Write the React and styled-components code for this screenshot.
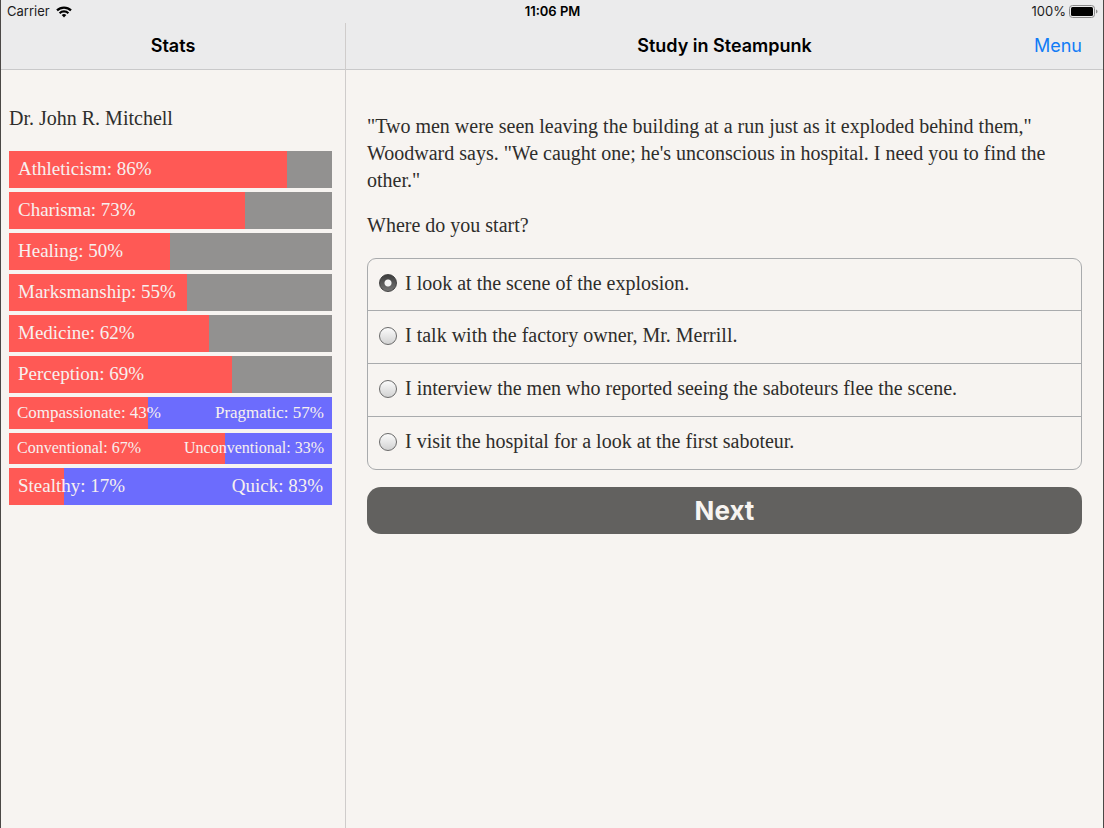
import React, { useState } from "react";
import styled, { createGlobalStyle, css } from "styled-components";

const GlobalStyle = createGlobalStyle`
  *, *::before, *::after { box-sizing: border-box; }
  body {
    margin: 0;
    background: #f7f4f1;
    color: #2e2d2b;
    font-family: "Liberation Serif", serif;
    font-size: 20px;
    line-height: 27px;
  }
`;

const sans = css`
  font-family: Inter, "Liberation Sans", sans-serif;
`;

const Screen = styled.div`
  min-height: 100vh;
  display: flex;
  flex-direction: column;
  border: solid #4b4846;
  border-width: 0 1px;
`;

const StatusBar = styled.div`
  ${sans}
  display: grid;
  grid-template-columns: 1fr auto 1fr;
  align-items: center;
  height: 23px;
  padding: 0 5px 0 6px;
  background: #ebebec;
  color: #1c1c1c;
  font-size: 13px;
  line-height: 23px;
`;

const StatusGroup = styled.div`
  display: flex;
  align-items: center;
  justify-content: ${(p) => (p.$end ? "flex-end" : "flex-start")};
  gap: ${(p) => (p.$end ? 3 : 6)}px;
`;

const Time = styled.time`
  color: #000;
  font-weight: 600;
`;

const Columns = styled.div`
  flex: 1;
  display: flex;
`;

const Sidebar = styled.aside`
  flex: 0 0 345px;
  display: flex;
  flex-direction: column;
  border-right: 1px solid #cfcccb;
`;

const Main = styled.main`
  flex: 1;
  min-width: 0;
`;

const NavBar = styled.header`
  ${sans}
  display: grid;
  grid-template-columns: 1fr auto 1fr;
  align-items: center;
  height: 47px;
  padding: 0 21px;
  border-bottom: 1px solid #c9c9ca;
  background: #ebebec;
`;

const Title = styled.h1`
  grid-column: 2;
  margin: 0;
  color: #000;
  font-size: 18px;
  font-weight: 600;
  line-height: 24px;
`;

const MenuButton = styled.button`
  justify-self: end;
  padding: 0;
  border: 0;
  background: none;
  color: #117cf6;
  font: inherit;
  font-size: 18px;
  line-height: 24px;
`;

const StatsPanel = styled.section`
  padding: 35px 13px 24px 8px;
`;

const Name = styled.p`
  margin: 0 0 19px;
`;

const StatList = styled.div`
  display: flex;
  flex-direction: column;
  gap: 4px;
`;

const barSizes = {
  large: css`
    height: 37px;
    padding: 0 9px 3px;
    font-size: 19px;
  `,
  medium: css`
    height: 32px;
    padding: 0 8px 2px;
    font-size: 17px;
  `,
  small: css`
    height: 31px;
    padding: 0 8px 2px;
    font-size: 16px;
  `,
};

const Bar = styled.div`
  display: flex;
  align-items: center;
  justify-content: space-between;
  color: #f7f0ef;
  background: linear-gradient(
    to right,
    #ff5955 var(--value),
    ${(p) => (p.$opposed ? "#6c6cfd" : "#929190")} var(--value)
  );
  white-space: nowrap;
  ${(p) => barSizes[p.$size]}
`;

const Story = styled.form`
  padding: 43px 21px 24px;
`;

const Paragraph = styled.p`
  margin: 0 0 18px;
`;

const Question = styled.p`
  margin: 0 0 19px;
`;

const Choices = styled.fieldset`
  min-width: 0;
  margin: 0 0 17px;
  padding: 0;
  border: 1px solid #a9abad;
  border-radius: 9px;
`;

const Choice = styled.label`
  display: flex;
  align-items: center;
  gap: 8px;
  min-height: 51px;
  padding: 0 11px 3px;

  & + & {
    min-height: 53px;
    border-top: 1px solid #a9abad;
  }
`;

const Radio = styled.input`
  appearance: none;
  flex: none;
  width: 18px;
  height: 18px;
  margin: 0;
  border: 1px solid #6a6a6a;
  border-radius: 50%;
  background: linear-gradient(#fbfbfb, #d2d2d2);

  &:checked {
    border-color: #404040;
    background:
      radial-gradient(circle, #f4f4f4 0 3px, transparent 4px),
      linear-gradient(#3d3d3d, #757575);
  }
`;

const NextButton = styled.button`
  ${sans}
  display: block;
  width: 100%;
  height: 47px;
  padding: 0;
  border: 0;
  border-radius: 14px;
  background: #62615f;
  color: #f7f4f1;
  font-size: 26px;
  font-weight: 700;
  line-height: 47px;
`;

const stats = [
  ["Athleticism", 86],
  ["Charisma", 73],
  ["Healing", 50],
  ["Marksmanship", 55],
  ["Medicine", 62],
  ["Perception", 69],
];

const opposedStats = [
  ["Compassionate", "Pragmatic", 43, "medium"],
  ["Conventional", "Unconventional", 67, "small"],
  ["Stealthy", "Quick", 17, "large"],
];

const choices = [
  "I look at the scene of the explosion.",
  "I talk with the factory owner, Mr. Merrill.",
  "I interview the men who reported seeing the saboteurs flee the scene.",
  "I visit the hospital for a look at the first saboteur.",
];

function WifiIcon() {
  return (
    <svg width="16" height="12" viewBox="0 0 16 12" fill="none" stroke="#000" strokeWidth="2.2" aria-hidden="true">
      <path d="M1 4.4a10 10 0 0 1 14 0" />
      <path d="M3.6 7.2a6.3 6.3 0 0 1 8.8 0" />
      <path d="M8 11.4 5.7 9.1a3.3 3.3 0 0 1 4.6 0z" fill="#000" stroke="none" />
    </svg>
  );
}

function BatteryIcon() {
  return (
    <svg width="29" height="13" viewBox="0 0 29 13" aria-hidden="true">
      <rect x="0.5" y="0.5" width="25" height="12" rx="3" fill="none" stroke="#8a8a8a" />
      <rect x="2" y="2" width="22" height="9" rx="1.5" fill="#000" />
      <path d="M27 4.5c2 .7 2 3.3 0 4z" fill="#8a8a8a" />
    </svg>
  );
}

export default function App() {
  const [selected, setSelected] = useState(0);

  return (
    <>
      <GlobalStyle />
      <Screen>
        <StatusBar>
          <StatusGroup>
            <span>Carrier</span>
            <WifiIcon />
          </StatusGroup>
          <Time>11:06 PM</Time>
          <StatusGroup $end>
            <span>100%</span>
            <BatteryIcon />
          </StatusGroup>
        </StatusBar>
        <Columns>
          <Sidebar>
            <NavBar>
              <Title as="h2">Stats</Title>
            </NavBar>
            <StatsPanel>
              <Name>Dr. John R. Mitchell</Name>
              <StatList>
                {stats.map(([label, value]) => (
                  <Bar key={label} $size="large" style={{ "--value": `${value}%` }}>
                    <span>{`${label}: ${value}%`}</span>
                  </Bar>
                ))}
                {opposedStats.map(([left, right, value, size]) => (
                  <Bar key={left} $size={size} $opposed style={{ "--value": `${value}%` }}>
                    <span>{`${left}: ${value}%`}</span>
                    <span>{`${right}: ${100 - value}%`}</span>
                  </Bar>
                ))}
              </StatList>
            </StatsPanel>
          </Sidebar>
          <Main>
            <NavBar>
              <Title>Study in Steampunk</Title>
              <MenuButton type="button">Menu</MenuButton>
            </NavBar>
            <Story onSubmit={(e) => e.preventDefault()}>
              <Paragraph>
                "Two men were seen leaving the building at a run just as it exploded behind them,"
                Woodward says. "We caught one; he's unconscious in hospital. I need you to find the
                other."
              </Paragraph>
              <Question id="question">Where do you start?</Question>
              <Choices aria-labelledby="question">
                {choices.map((text, i) => (
                  <Choice key={text}>
                    <Radio
                      type="radio"
                      name="choice"
                      checked={selected === i}
                      onChange={() => setSelected(i)}
                    />
                    {text}
                  </Choice>
                ))}
              </Choices>
              <NextButton type="submit">Next</NextButton>
            </Story>
          </Main>
        </Columns>
      </Screen>
    </>
  );
}
